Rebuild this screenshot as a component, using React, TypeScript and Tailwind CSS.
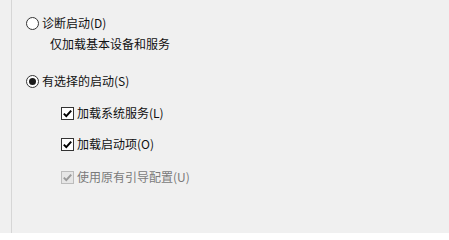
function Radio({ checked }: { checked?: boolean }) {
  return (
    <span className="flex h-[13px] w-[13px] shrink-0 items-center justify-center rounded-full border border-[#333333] bg-white">
      {checked && <span className="h-[7px] w-[7px] rounded-full bg-[#1a1a1a]" />}
    </span>
  );
}

function Check({ disabled }: { disabled?: boolean }) {
  return (
    <span
      className={
        disabled
          ? "flex h-[13px] w-[13px] shrink-0 items-center justify-center border border-[#bcbcbc] bg-[#e6e6e6]"
          : "flex h-[13px] w-[13px] shrink-0 items-center justify-center border border-[#333333] bg-white"
      }
    >
      <svg width="11" height="11" viewBox="0 0 11 11">
        <path
          d="M1.8 5.6 L4.3 8.1 L9.2 2.6"
          fill="none"
          stroke={disabled ? "#9a9a9a" : "#000000"}
          strokeWidth="2"
        />
      </svg>
    </span>
  );
}

export default function App() {
  return (
    <div className="h-[233px] w-[449px] overflow-hidden bg-[#f0f0f0] pl-[11px] text-[12px] leading-4 text-[#111111] [font-family:'Microsoft_YaHei','Noto_Sans_CJK_SC',sans-serif]">
      <div className="flex h-full flex-col border-l border-[#d6d6d6] pl-[14px] pt-[15px]">
        <div className="flex items-center gap-[3px]">
          <Radio />
          <span>诊断启动(D)</span>
        </div>
        <div className="mt-[5px] pl-[24px]">仅加载基本设备和服务</div>

        <div className="mt-[21px] flex items-center gap-[3px]">
          <Radio checked />
          <span>有选择的启动(S)</span>
        </div>

        <div className="mt-[16px] flex items-center gap-[3px] pl-[35px]">
          <Check />
          <span>加载系统服务(L)</span>
        </div>
        <div className="mt-[15px] flex items-center gap-[3px] pl-[35px]">
          <Check />
          <span>加载启动项(O)</span>
        </div>
        <div className="mt-[17px] flex items-center gap-[3px] pl-[35px] text-[#7a7a7a]">
          <Check disabled />
          <span>使用原有引导配置(U)</span>
        </div>
      </div>
    </div>
  );
}
